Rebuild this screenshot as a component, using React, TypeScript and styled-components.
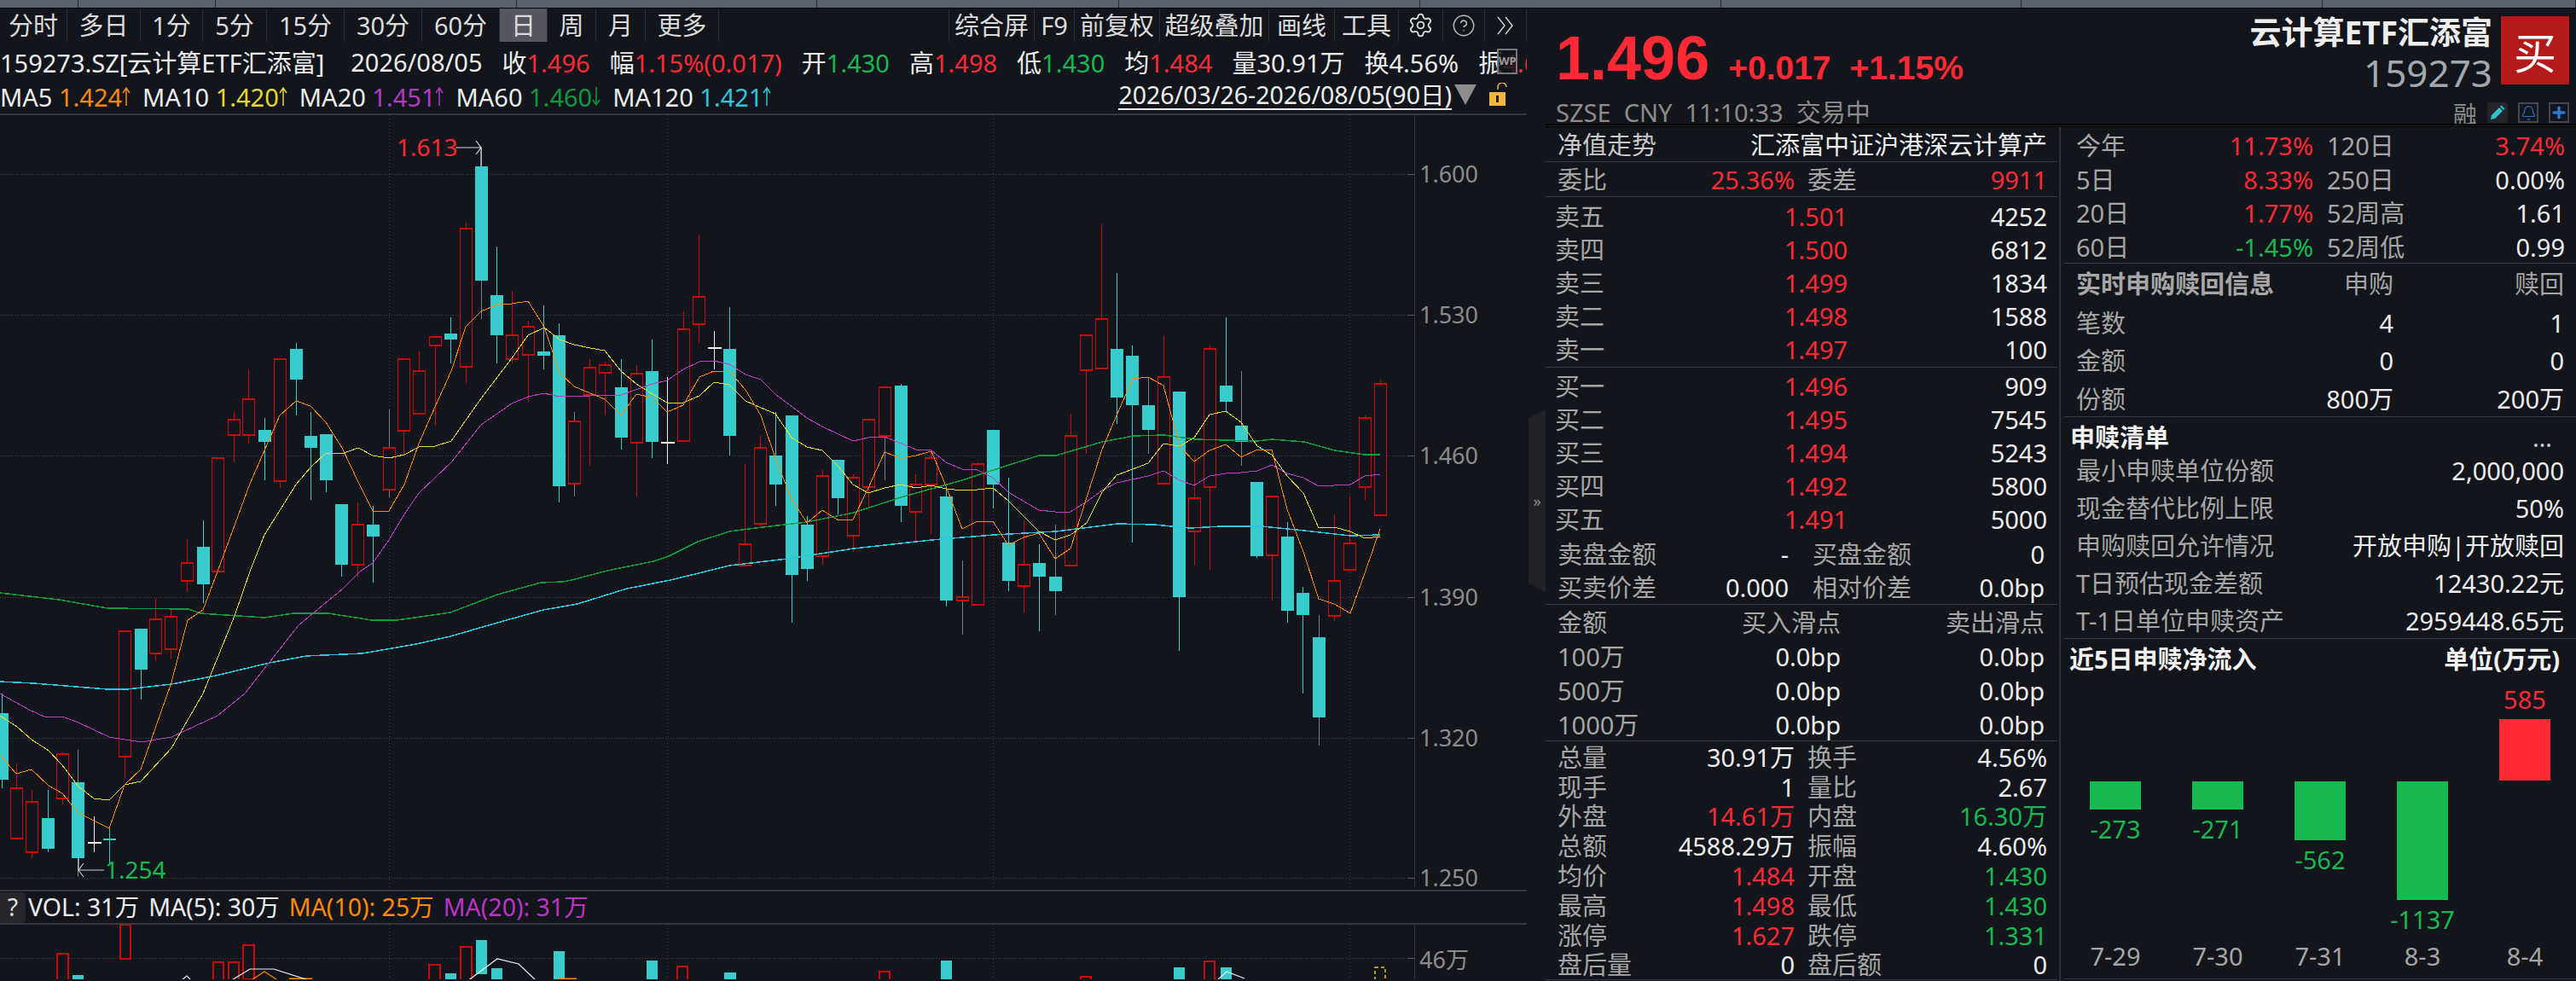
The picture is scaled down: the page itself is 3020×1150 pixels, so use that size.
import React from "react";
import styled, { createGlobalStyle } from "styled-components";
import { Bell, CircleHelp, Plus, Settings } from "lucide-react";

const BG = "#12161c";
const RED = "#ff2a35";
const GREEN = "#16b94f";
const TEAL = "#39cccc";
const CANDLE_RED = "#cc0a0a";
const GRAY = "#a6a6a6";
const WHITE = "#ececec";
const LINE = "#36383d";

const GlobalStyle = createGlobalStyle`
  html, body {
    margin: 0;
    padding: 0;
    background: ${BG};
  }
  * {
    box-sizing: border-box;
  }
  body {
    font-family: "Noto Sans", "Noto Sans CJK SC", sans-serif;
    font-size: 29px;
    color: ${WHITE};
  }
`;

const Root = styled.div`
  width: 3020px;
  height: 1150px;
  overflow: hidden;
  background: ${BG};
`;

const TopStrip = styled.div`
  display: flex;
  height: 10px;
  background: #5a626c;
  border-bottom: 1px solid #000;
`;

const StripPart = styled.div<{ $w: number }>`
  width: ${(p) => p.$w}px;
  border-right: 1px solid #23262b;
`;

const Body = styled.div`
  display: flex;
  height: 1140px;
`;

const ChartPane = styled.div`
  width: 1790px;
  display: flex;
  flex-direction: column;
`;

const Toolbar = styled.div`
  display: flex;
  height: 39px;
`;

const ToolCell = styled.div<{ $w: number; $active?: boolean; $first?: boolean }>`
  width: ${(p) => p.$w}px;
  display: flex;
  align-items: center;
  justify-content: center;
  white-space: nowrap;
  color: #dcdcdc;
  line-height: 1;
  background: ${(p) => (p.$active ? "#55565f" : "transparent")};
  border-right: 1px solid #2b2e33;
  border-left: ${(p) => (p.$first ? "1px solid #2b2e33" : "0")};
`;

const Spacer = styled.div`
  flex: 1;
`;

const InfoLine = styled.div`
  position: relative;
  height: 46px;
  display: flex;
  align-items: center;
  gap: 23px;
  overflow: hidden;
  white-space: nowrap;
`;

const InfoItem = styled.span<{ $gapAfter?: number }>`
  margin-right: ${(p) => p.$gapAfter ?? 0}px;
`;

const Num = styled.span<{ $c: string }>`
  color: ${(p) => p.$c};
`;

const WpIcon = styled.div`
  position: absolute;
  left: 1755px;
  top: 8px;
  width: 24px;
  height: 30px;
  border: 2px solid #77797d;
  background: rgba(18, 22, 28, 0.82);
  color: #9a9a9a;
  font-size: 13px;
  font-weight: 700;
  line-height: 24px;
  text-align: center;
`;

const MaLine = styled.div`
  height: 40px;
  display: flex;
  align-items: center;
  gap: 14px;
  padding: 0 22px 2px 0;
  white-space: nowrap;
  border-bottom: 2px solid ${LINE};
  line-height: 1;
`;

const MaItem = styled.span`
  display: inline-flex;
  align-items: center;
  gap: 0;
`;

const DateRange = styled.div`
  margin-left: auto;
  display: flex;
  align-items: flex-start;
`;

const DateText = styled.span`
  border-bottom: 2px solid #eee;
  padding-bottom: 1px;
  margin-right: 3px;
  font-size: 28.5px;
`;

const Triangle = styled.span`
  width: 0;
  height: 0;
  margin-top: 2px;
  margin-right: 15px;
  border-left: 13px solid transparent;
  border-right: 13px solid transparent;
  border-top: 24px solid #8d8d8d;
`;

const ChartSvg = styled.svg`
  display: block;
  width: 1790px;
  flex: none;
`;

const VolBar = styled.div`
  height: 41px;
  display: flex;
  align-items: center;
  gap: 11px;
  border-top: 2px solid ${LINE};
  border-bottom: 2px solid ${LINE};
  font-size: 28.5px;
  line-height: 1;
  white-space: nowrap;
`;

const HelpChip = styled.div`
  width: 30px;
  height: 36px;
  margin-right: -8px;
  border-radius: 0 5px 5px 0;
  background: #25272d;
  display: flex;
  align-items: center;
  justify-content: center;
  color: #ddd;
`;

const Splitter = styled.div`
  width: 22px;
  display: flex;
  align-items: center;
  justify-content: flex-end;
`;

const Handle = styled.div`
  width: 20px;
  height: 214px;
  margin-top: 14px;
  background: #212227;
  clip-path: polygon(0 10px, 100% 0, 100% 100%, 0 calc(100% - 10px));
  display: flex;
  align-items: center;
  justify-content: center;
  color: #8f8f8f;
  font-size: 18px;
`;

const Panel = styled.div`
  width: 1208px;
  display: flex;
  flex-direction: column;
`;

const Header = styled.div`
  height: 135px;
  flex: none;
  display: flex;
  justify-content: space-between;
  overflow: hidden;
`;

const QuoteBlock = styled.div`
  padding: 22px 0 0 12px;
`;

const PriceRow = styled.div`
  display: flex;
  align-items: baseline;
  gap: 22px;
  height: 72px;
  color: ${RED};
  font-family: "Liberation Sans", sans-serif;
  font-weight: 700;
  font-size: 39px;
  line-height: 72px;
`;

const BigPrice = styled.span`
  font-size: 72px;
`;

const Meta = styled.div`
  margin-top: 13px;
  color: #8c8c8c;
  font-size: 29px;
  line-height: 30px;
  white-space: pre;
`;

const Identity = styled.div`
  display: flex;
  flex-direction: column;
  align-items: flex-end;
  padding: 9px 8px 0 0;
`;

const IdentityTop = styled.div`
  display: flex;
  gap: 10px;
`;

const NameBlock = styled.div`
  display: flex;
  flex-direction: column;
  align-items: flex-end;
`;

const EtfName = styled.div`
  font-size: 37px;
  font-weight: 700;
  line-height: 38px;
  color: #eee;
`;

const EtfCode = styled.div`
  font-size: 44px;
  line-height: 52px;
  margin-top: 2px;
  color: #a3a8ae;
`;

const BuyBox = styled.div`
  width: 80px;
  height: 80px;
  background: #b41a1a;
  color: #fff;
  font-size: 50px;
  display: flex;
  align-items: center;
  justify-content: center;
`;

const IconRow = styled.div`
  margin-top: 9px;
  display: flex;
  align-items: flex-start;
  gap: 12px;
  height: 26px;
`;

const Rong = styled.span`
  color: #8d8d8d;
  font-size: 28px;
  line-height: 28px;
`;

const IconBox = styled.div<{ $fill?: boolean }>`
  width: 24px;
  height: 24px;
  display: flex;
  align-items: center;
  justify-content: center;
  border-radius: ${(p) => (p.$fill ? "3px" : "0")};
  background: ${(p) => (p.$fill ? "#25262b" : "transparent")};
  border: ${(p) => (p.$fill ? "0" : "2px solid #44464b")};
`;

const DoubleRule = styled.div`
  height: 4px;
  flex: none;
  background: #1a1b1f;
  border-top: 2px solid #000;
  border-bottom: 1px solid #000;
`;

const Columns = styled.div`
  display: flex;
  flex: 1;
  min-height: 0;
`;

const Col = styled.div`
  width: 600px;
  display: flex;
  flex-direction: column;
`;

const Gutter = styled.div`
  width: 8px;
  padding: 0 4px 0 2px;
  &::before {
    content: "";
    display: block;
    height: 100%;
    background: #303236;
  }
`;

const Section = styled.div<{ $h: number; $pt?: number; $border?: boolean }>`
  height: ${(p) => p.$h}px;
  flex: none;
  padding-top: ${(p) => p.$pt ?? 0}px;
  border-bottom: ${(p) => (p.$border === false ? "0" : `1px solid ${LINE}`)};
`;

const Row = styled.div<{ $h: number; $cols?: string; $pad?: string; $gap?: number }>`
  height: ${(p) => p.$h}px;
  display: grid;
  grid-template-columns: ${(p) => p.$cols ?? "278px 1fr"};
  column-gap: ${(p) => p.$gap ?? 0}px;
  align-items: center;
  padding: ${(p) => p.$pad ?? "0 12px 0 14px"};
  line-height: 1;
  white-space: nowrap;
`;

const Pair = styled.div`
  display: flex;
  justify-content: space-between;
  align-items: center;
`;

const Label = styled.span<{ $c?: string; $bold?: boolean }>`
  color: ${(p) => p.$c ?? GRAY};
  font-weight: ${(p) => (p.$bold ? 700 : 400)};
`;

const Value = styled.span<{ $c?: string; $left?: boolean }>`
  color: ${(p) => p.$c ?? WHITE};
  text-align: ${(p) => (p.$left ? "left" : "right")};
`;

const InflowGrid = styled.div`
  display: grid;
  grid-template-columns: repeat(5, 120px);
`;

const InflowCol = styled.div`
  display: flex;
  flex-direction: column;
  align-items: center;
`;

const UpZone = styled.div`
  height: 121px;
  display: flex;
  flex-direction: column;
  justify-content: flex-end;
  align-items: center;
  padding-bottom: 1px;
`;

const DownZone = styled.div`
  height: 188px;
  display: flex;
  flex-direction: column;
  align-items: center;
`;

const Bar = styled.div<{ $c: string }>`
  width: 60px;
  background: ${(p) => p.$c};
`;

const BarLabel = styled.div<{ $c: string; $up?: boolean }>`
  color: ${(p) => p.$c};
  line-height: 34px;
  margin: ${(p) => (p.$up ? "0 0 6px" : "6px 0 0")};
`;

const InflowDate = styled.div`
  color: ${GRAY};
  line-height: 34px;
`;

const BottomRule = styled.div`
  height: 1px;
  background: ${LINE};
  margin-top: 9px;
`;

// x, high, low, body top, body bottom, kind. R/T are the ones with a grey wick
type Candle = [number, number, number, number, number, "r" | "t" | "w" | "R" | "T"];

const candles: Candle[] = [
  [2, 813, 924, 836, 914, "t"],
  [19.5, 895, 983, 924, 983, "r"],
  [37, 926, 1006, 940, 999, "r"],
  [56, 926, 999, 959, 995, "t"],
  [73.5, 881, 943, 884, 936, "r"],
  [91.5, 879, 1028, 917, 1006, "T"],
  [110, 957, 999, 987, 987, "w"],
  [128.5, 970, 1013, 983, 985, "t"],
  [146.5, 740, 912, 740, 887, "r"],
  [165, 737, 820, 737, 785, "t"],
  [182.5, 702, 775, 726, 766, "r"],
  [200.5, 715, 773, 723, 761, "r"],
  [219, 632, 694, 660, 681, "r"],
  [238, 610, 707, 641, 685, "t"],
  [255.5, 537, 670, 537, 670, "r"],
  [274, 483, 542, 492, 510, "r"],
  [291.5, 433, 520, 468, 510, "r"],
  [310.5, 490, 563, 504, 518, "t"],
  [328, 421, 572, 421, 564, "r"],
  [347, 402, 487, 409, 445, "t"],
  [364.5, 483, 586, 511, 525, "t"],
  [382.5, 509, 577, 509, 563, "t"],
  [400.5, 591, 676, 591, 662, "t"],
  [419.5, 589, 676, 615, 662, "r"],
  [437.5, 593, 683, 615, 629, "t"],
  [456, 480, 583, 525, 574, "R"],
  [473.5, 421, 533, 421, 505, "r"],
  [491.5, 412, 485, 435, 485, "r"],
  [510, 393, 499, 395, 405, "r"],
  [528.5, 372, 426, 391, 398, "t"],
  [546.5, 261, 449, 268, 430, "r"],
  [564.5, 173, 374, 195, 329, "T"],
  [582.5, 289, 426, 346, 393, "t"],
  [600.5, 341, 426, 393, 421, "r"],
  [619.5, 376, 471, 383, 416, "r"],
  [637.5, 358, 433, 412, 417, "t"],
  [655.5, 379, 589, 393, 570, "t"],
  [673.5, 483, 582, 494, 567, "R"],
  [691.5, 421, 546, 431, 463, "r"],
  [709.5, 424, 487, 428, 437, "r"],
  [728.5, 421, 527, 454, 513, "t"],
  [746, 428, 582, 438, 519, "r"],
  [764.5, 398, 537, 435, 518, "t"],
  [782.5, 442, 544, 518, 518, "w"],
  [801, 365, 517, 386, 517, "r"],
  [819.5, 275, 402, 348, 380, "r"],
  [837.5, 388, 433, 407, 407, "w"],
  [855.5, 360, 534, 409, 511, "t"],
  [873.5, 544, 663, 638, 663, "r"],
  [891.5, 511, 617, 525, 614, "r"],
  [909.5, 483, 593, 534, 568, "t"],
  [928, 487, 730, 487, 674, "t"],
  [946.5, 605, 681, 615, 667, "t"],
  [964.5, 551, 662, 558, 652, "r"],
  [982.5, 539, 603, 539, 584, "t"],
  [1000.5, 556, 647, 560, 628, "r"],
  [1018.5, 490, 595, 492, 571, "r"],
  [1037.5, 454, 563, 454, 511, "R"],
  [1056, 450, 612, 452, 593, "t"],
  [1073.5, 556, 635, 568, 600, "r"],
  [1091.5, 528, 626, 537, 568, "r"],
  [1109.5, 572, 711, 582, 704, "t"],
  [1128, 657, 744, 700, 704, "R"],
  [1146.5, 542, 709, 544, 709, "r"],
  [1164.5, 504, 596, 504, 568, "t"],
  [1182.5, 560, 693, 636, 681, "t"],
  [1200.5, 610, 719, 662, 687, "r"],
  [1218.5, 638, 740, 660, 676, "t"],
  [1237.5, 615, 721, 676, 693, "T"],
  [1255.5, 485, 663, 511, 663, "r"],
  [1273.5, 393, 532, 393, 434, "r"],
  [1291.5, 263, 432, 374, 432, "r"],
  [1309.5, 320, 497, 409, 466, "t"],
  [1327.5, 405, 636, 417, 475, "t"],
  [1346.5, 443, 532, 475, 504, "T"],
  [1364.5, 393, 567, 442, 567, "r"],
  [1382.5, 459, 763, 459, 700, "t"],
  [1400.5, 534, 663, 584, 623, "r"],
  [1418.5, 405, 668, 409, 571, "r"],
  [1437.5, 372, 483, 452, 471, "t"],
  [1455.5, 435, 546, 499, 518, "T"],
  [1473.5, 565, 654, 565, 652, "t"],
  [1491.5, 582, 704, 582, 651, "r"],
  [1509.5, 612, 730, 629, 716, "t"],
  [1527.5, 688, 813, 695, 721, "t"],
  [1546.5, 721, 874, 747, 841, "T"],
  [1564.5, 603, 728, 681, 722, "r"],
  [1582.5, 582, 668, 637, 668, "r"],
  [1600.5, 487, 586, 490, 571, "r"],
  [1618.5, 445, 604, 450, 604, "r"],
];

const ma5 =
  "0,885 19,907 37,902 57,921 73,930 92,953 128,971 146,920 165,902 201,800 220,727 238,715 255,670 293,567 328,487 347,470 364,476 382,495 401,525 420,565 437,599 456,599 474,568 491,520 510,477 529,435 546,383 564,365 583,357 600,356 619,353 638,383 656,437 673,453 692,461 709,468 728,487 746,462 765,466 782,483 801,475 820,442 837,435 855,435 874,457 892,487 909,537 928,585 946,613 964,598 983,610 1000,609 1018,572 1037,530 1056,537 1074,534 1092,529 1109,570 1128,620 1146,611 1164,611 1182,639 1200,630 1218,625 1237,655 1255,643 1274,583 1292,527 1309,487 1328,444 1346,442 1364,452 1383,523 1400,541 1418,528 1437,521 1455,536 1474,527 1491,527 1509,597 1528,647 1546,702 1564,708 1583,719 1600,672 1618,620";
const ma10 =
  "0,839 20,852 37,867 57,880 73,897 92,922 110,936 128,938 146,920 165,916 201,877 238,813 275,722 293,670 310,627 347,568 364,548 382,531 401,532 420,525 437,534 456,537 474,533 491,524 510,523 529,517 564,467 600,420 619,393 638,384 656,398 673,404 692,408 709,411 728,435 746,450 765,462 782,472 801,472 820,464 837,448 855,451 874,470 892,478 909,485 928,513 946,524 964,528 983,547 1000,568 1018,578 1037,572 1056,568 1074,572 1092,569 1109,573 1128,575 1146,574 1164,572 1182,587 1200,605 1218,623 1237,633 1255,627 1274,613 1292,577 1309,557 1328,550 1346,543 1364,520 1383,523 1400,513 1418,486 1437,482 1455,495 1474,523 1491,533 1509,558 1528,578 1546,619 1564,618 1583,623 1600,631 1618,629";
const ma20 =
  "0,813 34,832 54,841 73,840 92,847 128,864 166,870 201,864 255,839 287,813 313,780 350,733 402,690 422,670 437,660 456,633 474,603 491,578 529,542 564,498 600,473 619,465 638,461 656,465 692,464 728,463 765,450 782,446 801,433 820,424 837,423 855,427 874,439 892,445 909,462 946,490 964,500 1000,517 1018,513 1037,512 1074,527 1092,528 1109,542 1128,550 1146,551 1164,560 1182,577 1218,598 1237,600 1255,600 1274,588 1292,575 1309,566 1328,562 1346,558 1364,552 1383,563 1400,569 1418,558 1437,555 1455,554 1474,552 1491,545 1509,555 1528,560 1546,570 1583,568 1600,558 1618,556";
const ma60 =
  "0,695 69,703 126,713 221,714 235,719 310,724 344,719 385,719 436,727 465,727 528,718 583,697 634,683 660,682 670,680 712,669 766,658 784,652 818,635 855,623 886,619 946,612 1001,601 1056,583 1128,563 1183,545 1218,534 1238,534 1292,518 1329,511 1365,510 1401,515 1474,517 1491,515 1529,518 1565,528 1600,533 1618,533";
const ma120 =
  "0,799 40,801 126,808 149,808 201,802 253,792 316,777 359,769 425,766 488,755 528,746 583,730 637,715 677,708 735,690 786,680 827,670 855,663 923,655 1001,643 1092,633 1165,627 1238,623 1310,614 1353,615 1395,619 1432,617 1480,617 1529,622 1583,628 1618,627";

const maLines: [string, string, number][] = [
  [ma120, "#2cc6e0", 1.5],
  [ma60, "#0f9a3e", 1.5],
  [ma20, "#c33ccc", 1],
  [ma10, "#e8dc2c", 1],
  [ma5, "#ff8a00", 1],
];

const priceTicks: [number, string][] = [
  [204, "1.600"],
  [369, "1.530"],
  [534, "1.460"],
  [700, "1.390"],
  [865, "1.320"],
  [1029, "1.250"],
];

const vGrid = [456, 782, 1164.5, 1582];

// left, right, top, kind
const volBars: [number, number, number, "r" | "t"][] = [
  [67, 80, 1120, "r"],
  [85, 98, 1145, "t"],
  [141, 153, 1086, "r"],
  [250, 262, 1130, "r"],
  [268, 280, 1130, "r"],
  [285, 298, 1110, "r"],
  [503, 516, 1133, "r"],
  [522, 535, 1143, "t"],
  [540, 553, 1112, "r"],
  [558, 571, 1104, "t"],
  [576, 589, 1137, "t"],
  [649, 662, 1117, "t"],
  [758, 771, 1128, "t"],
  [794, 806, 1135, "r"],
  [849, 862, 1142, "t"],
  [1031, 1043, 1141, "r"],
  [1103, 1116, 1128, "t"],
  [1267, 1279, 1147, "r"],
  [1376, 1389, 1136, "t"],
  [1412, 1424, 1129, "r"],
  [1431, 1444, 1136, "t"],
];

const CandleShape = ({ c }: { c: Candle }) => {
  const [x, high, low, top, bottom, kind] = c;
  const isRed = kind === "r" || kind === "R";
  const isTeal = kind === "t" || kind === "T";
  const body = isRed ? CANDLE_RED : isTeal ? TEAL : "#f2f2f2";
  const wick = kind === "R" || kind === "T" ? "#77808a" : kind === "w" ? "#f2f2f2" : body;
  const wx = Math.floor(x) + 0.5;
  if (kind === "w") {
    return (
      <g shapeRendering="crispEdges">
        <line x1={wx} x2={wx} y1={high} y2={low} stroke={wick} />
        <line x1={wx - 8} x2={wx + 8} y1={top + 0.5} y2={top + 0.5} stroke={wick} strokeWidth={2} />
      </g>
    );
  }
  return (
    <g shapeRendering="crispEdges">
      <line x1={wx} x2={wx} y1={high} y2={low} stroke={wick} />
      {isRed ? (
        <rect x={wx - 7} y={top} width={14} height={bottom - top} fill={BG} stroke={body} strokeWidth={1.5} />
      ) : (
        <rect x={wx - 7.5} y={top} width={15} height={Math.max(bottom - top, 2)} fill={body} />
      )}
    </g>
  );
};

const GridLines = ({ top, bottom, ys }: { top: number; bottom: number; ys: number[] }) => (
  <g shapeRendering="crispEdges">
    {vGrid.map((x) => (
      <line key={x} x1={x} x2={x} y1={top} y2={bottom} stroke="#3b3e44" strokeDasharray="1 3" />
    ))}
    {ys.map((y) => (
      <g key={y}>
        <line x1={0} x2={1650} y1={y + 0.5} y2={y + 0.5} stroke="#41444a" strokeDasharray="1 2" />
        <line x1={1650} x2={1658} y1={y + 0.5} y2={y + 0.5} stroke="#5a5d62" />
      </g>
    ))}
    <line x1={1658.5} x2={1658.5} y1={top} y2={bottom} stroke="#34363b" />
  </g>
);

const MainChart = () => (
  <ChartSvg viewBox="0 135 1790 908" height={908}>
    <GridLines top={135} bottom={1040} ys={priceTicks.map((t) => t[0])} />
    {candles.map((c) => (
      <CandleShape key={c[0]} c={c} />
    ))}
    {maLines.map(([pts, color, w]) => (
      <polyline key={color} points={pts} fill="none" stroke={color} strokeWidth={w} shapeRendering="crispEdges" />
    ))}
    <path d="M534 173H564M558 165L564 173V195M558 181L564 173" fill="none" stroke="#d8d8d8" strokeWidth={1.2} />
    <text x={465} y={183} fill={RED} fontSize={28}>
      1.613
    </text>
    <path d="M122 1020H92M98 1012L92 1020V1006M98 1028L92 1020" fill="none" stroke="#c8c8c8" strokeWidth={1.2} />
    <text x={123} y={1030} fill={GREEN} fontSize={28}>
      1.254
    </text>
    {priceTicks.map(([y, label]) => (
      <text key={label} x={1664} y={y + 10} fill="#8c8c8c" fontSize={27}>
        {label}
      </text>
    ))}
  </ChartSvg>
);

const VolumeChart = () => (
  <ChartSvg viewBox="0 1086 1790 64" height={64}>
    <GridLines top={1086} bottom={1150} ys={[1125]} />
    {volBars.map(([l, r, top, kind]) =>
      kind === "r" ? (
        <rect key={l} x={l} y={top} width={r - l} height={40} fill={BG} stroke={CANDLE_RED} strokeWidth={1.5} shapeRendering="crispEdges" />
      ) : (
        <rect key={l} x={l} y={top} width={r - l} height={40} fill={TEAL} shapeRendering="crispEdges" />
      )
    )}
    <rect x={850} y={1142} width={13} height={10} fill={TEAL} />
    <rect x={1612} y={1136} width={12} height={20} fill="none" stroke="#e8c52c" strokeWidth={1.5} strokeDasharray="4 3" />
    <path d="M654 1149.5H676M339 1149.5H366" stroke="#ff8a00" strokeWidth={2} />
    <polyline points="293,1152 310,1141 327,1152" fill="none" stroke="#ff8a00" strokeWidth={1.2} />
    <polyline points="270,1152 293,1138 321,1138 365,1152" fill="none" stroke="#f2f2f2" strokeWidth={1.2} />
    <polyline points="212,1152 219,1146 225,1152" fill="none" stroke="#f2f2f2" strokeWidth={1.2} />
    <polyline points="548,1152 583,1126 608,1132 629,1152" fill="none" stroke="#f2f2f2" strokeWidth={1.2} />
    <polyline points="1426,1152 1438,1141 1459,1149" fill="none" stroke="#f2f2f2" strokeWidth={1.2} />
    <text x={1664} y={1137} fill="#8c8c8c" fontSize={27}>
      46万
    </text>
  </ChartSvg>
);

const MaArrow = ({ up, color }: { up: boolean; color: string }) => (
  <svg width="10" height="24" viewBox="0 0 10 24">
    <path
      d={up ? "M5 23V2M1 8L5 2L9 8" : "M5 1V22M1 16L5 22L9 16"}
      fill="none"
      stroke={color}
      strokeWidth={1.5}
    />
  </svg>
);

const LockIcon = () => (
  <svg width="22" height="28" viewBox="0 0 22 28">
    <path d="M11 9V6a5 5 0 0 1 10 0" fill="none" stroke="#f2b63c" strokeWidth={1.5} transform="translate(-1 -1)" />
    <rect x="0" y="11" width="19" height="16" fill="#f2b63c" />
    <rect x="8" y="15" width="3" height="8" fill="#222" />
  </svg>
);

const PencilIcon = () => (
  <svg width="18" height="18" viewBox="0 0 18 18">
    <path d="M1 17l1-5L11 3l4 4-9 9zM12 2l1.5-1.5 4 4L16 6z" fill="#2fc4d4" />
  </svg>
);

const leftTabs: [string, number][] = [
  ["分时", 79],
  ["多日", 86],
  ["1分", 73],
  ["5分", 75],
  ["15分", 91],
  ["30分", 91],
  ["60分", 91],
  ["日", 56],
  ["周", 57],
  ["月", 58],
  ["更多", 86],
];

const rightTabs: [string, number][] = [
  ["综合屏", 101],
  ["F9", 47],
  ["前复权", 100],
  ["超级叠加", 128],
  ["画线", 77],
  ["工具", 75],
];

const maItems: [string, string, string, boolean][] = [
  ["MA5", "1.424", "#ff8a00", true],
  ["MA10", "1.420", "#e5d82a", true],
  ["MA20", "1.451", "#b636c8", true],
  ["MA60", "1.460", "#0b9a3c", false],
  ["MA120", "1.421", "#2cc5dc", true],
];

const sells = [
  ["卖五", "1.501", "4252"],
  ["卖四", "1.500", "6812"],
  ["卖三", "1.499", "1834"],
  ["卖二", "1.498", "1588"],
  ["卖一", "1.497", "100"],
];

const buys = [
  ["买一", "1.496", "909"],
  ["买二", "1.495", "7545"],
  ["买三", "1.494", "5243"],
  ["买四", "1.492", "5800"],
  ["买五", "1.491", "5000"],
];

const slips = [
  ["100万", "0.0bp", "0.0bp"],
  ["500万", "0.0bp", "0.0bp"],
  ["1000万", "0.0bp", "0.0bp"],
];

const stats: [string, string, string | undefined, string, string, string | undefined][] = [
  ["总量", "30.91万", undefined, "换手", "4.56%", undefined],
  ["现手", "1", undefined, "量比", "2.67", undefined],
  ["外盘", "14.61万", RED, "内盘", "16.30万", GREEN],
  ["总额", "4588.29万", undefined, "振幅", "4.60%", undefined],
  ["均价", "1.484", RED, "开盘", "1.430", GREEN],
  ["最高", "1.498", RED, "最低", "1.430", GREEN],
  ["涨停", "1.627", RED, "跌停", "1.331", GREEN],
  ["盘后量", "0", undefined, "盘后额", "0", undefined],
];

const returns: [string, string, string, string, string, string | undefined][] = [
  ["今年", "11.73%", RED, "120日", "3.74%", RED],
  ["5日", "8.33%", RED, "250日", "0.00%", undefined],
  ["20日", "1.77%", RED, "52周高", "1.61", undefined],
  ["60日", "-1.45%", GREEN, "52周低", "0.99", undefined],
];

const creations = [
  ["笔数", "4", "1"],
  ["金额", "0", "0"],
  ["份额", "800万", "200万"],
];

const etfRows = [
  ["最小申赎单位份额", "2,000,000"],
  ["现金替代比例上限", "50%"],
  ["申购赎回允许情况", "开放申购|开放赎回"],
  ["T日预估现金差额", "12430.22元"],
  ["T-1日单位申赎资产", "2959448.65元"],
];

const inflows: [string, number][] = [
  ["7-29", -273],
  ["7-30", -271],
  ["7-31", -562],
  ["8-3", -1137],
  ["8-4", 585],
];

const BAR_SCALE = 0.1225;

const App = () => {
  return (
    <Root>
      <GlobalStyle />
      <TopStrip>
        {[92, 161, 353, 352, 354, 353, 353, 352, 353, 297].map((w, i) => (
          <StripPart key={i} $w={w} />
        ))}
      </TopStrip>
      <Body>
        <ChartPane>
          <Toolbar>
            {leftTabs.map(([t, w]) => (
              <ToolCell key={t} $w={w} $active={t === "日"}>
                {t}
              </ToolCell>
            ))}
            <Spacer />
            {rightTabs.map(([t, w], i) => (
              <ToolCell key={t} $w={w} $first={i === 0}>
                {t}
              </ToolCell>
            ))}
            <ToolCell $w={52}>
              <Settings size={31} strokeWidth={1.4} />
            </ToolCell>
            <ToolCell $w={49}>
              <CircleHelp size={28} strokeWidth={1.3} color="#bbb" />
            </ToolCell>
            <ToolCell $w={49}>
              <svg width="22" height="22" viewBox="0 0 22 22">
                <path d="M2 1l8 10-8 10M11 1l8 10-8 10" fill="none" stroke="#ccc" strokeWidth={1.5} />
              </svg>
            </ToolCell>
          </Toolbar>
          <InfoLine>
            <InfoItem $gapAfter={8}>159273.SZ[云计算ETF汇添富]</InfoItem>
            <InfoItem>2026/08/05</InfoItem>
            <InfoItem>
              收<Num $c={RED}>1.496</Num>
            </InfoItem>
            <InfoItem>
              幅<Num $c={RED}>1.15%(0.017)</Num>
            </InfoItem>
            <InfoItem>
              开<Num $c={GREEN}>1.430</Num>
            </InfoItem>
            <InfoItem>
              高<Num $c={RED}>1.498</Num>
            </InfoItem>
            <InfoItem>
              低<Num $c={GREEN}>1.430</Num>
            </InfoItem>
            <InfoItem>
              均<Num $c={RED}>1.484</Num>
            </InfoItem>
            <InfoItem>量30.91万</InfoItem>
            <InfoItem>换4.56%</InfoItem>
            <InfoItem>
              振<Num $c={RED}>4.60%</Num>
            </InfoItem>
            <WpIcon>WP</WpIcon>
          </InfoLine>
          <MaLine>
            {maItems.map(([name, value, color, up]) => (
              <MaItem key={name}>
                {name}&nbsp;<Num $c={color}>{value}</Num>
                <MaArrow up={up} color={color} />
              </MaItem>
            ))}
            <DateRange>
              <DateText>2026/03/26-2026/08/05(90日)</DateText>
              <Triangle />
              <LockIcon />
            </DateRange>
          </MaLine>
          <MainChart />
          <VolBar>
            <HelpChip>?</HelpChip>
            <span>VOL: 31万</span>
            <span>MA(5): 30万</span>
            <Num $c="#ff8a00">MA(10): 25万</Num>
            <Num $c="#bb35c4">MA(20): 31万</Num>
          </VolBar>
          <VolumeChart />
        </ChartPane>
        <Splitter>
          <Handle>»</Handle>
        </Splitter>
        <Panel>
          <Header>
            <QuoteBlock>
              <PriceRow>
                <BigPrice>1.496</BigPrice>
                <span>+0.017</span>
                <span>+1.15%</span>
              </PriceRow>
              <Meta>{"SZSE  CNY  11:10:33  交易中"}</Meta>
            </QuoteBlock>
            <Identity>
              <IdentityTop>
                <NameBlock>
                  <EtfName>云计算ETF汇添富</EtfName>
                  <EtfCode>159273</EtfCode>
                </NameBlock>
                <BuyBox>买</BuyBox>
              </IdentityTop>
              <IconRow>
                <Rong>融</Rong>
                <IconBox $fill>
                  <PencilIcon />
                </IconBox>
                <IconBox>
                  <Bell size={19} strokeWidth={1.4} color="#2f6fc8" />
                </IconBox>
                <IconBox>
                  <Plus size={20} strokeWidth={4} color="#3a78d0" />
                </IconBox>
              </IconRow>
            </Identity>
          </Header>
          <DoubleRule />
          <Columns>
            <Col>
              <Section $h={41}>
                <Row $h={40} $cols="1fr auto">
                  <Label $c="#c8c8c8">净值走势</Label>
                  <Value>汇添富中证沪港深云计算产</Value>
                </Row>
              </Section>
              <Section $h={41}>
                <Row $h={40} $gap={15}>
                  <Pair>
                    <Label>委比</Label>
                    <Value $c={RED}>25.36%</Value>
                  </Pair>
                  <Pair>
                    <Label>委差</Label>
                    <Value $c={RED}>9911</Value>
                  </Pair>
                </Row>
              </Section>
              <Section $h={200} $pt={3}>
                {sells.map(([l, p, q]) => (
                  <Row key={l} $h={39} $cols="269px 1fr auto" $pad="0 12px 0 11px">
                    <Label>{l}</Label>
                    <Value $c={RED} $left>
                      {p}
                    </Value>
                    <Value>{q}</Value>
                  </Row>
                ))}
              </Section>
              <Section $h={278} $pt={2}>
                {buys.map(([l, p, q]) => (
                  <Row key={l} $h={39} $cols="269px 1fr auto" $pad="0 12px 0 11px">
                    <Label>{l}</Label>
                    <Value $c={RED} $left>
                      {p}
                    </Value>
                    <Value>{q}</Value>
                  </Row>
                ))}
                <Row $h={39} $cols="271px 1fr" $gap={28} $pad="3px 15px 0 14px">
                  <Pair>
                    <Label>卖盘金额</Label>
                    <Value>-</Value>
                  </Pair>
                  <Pair>
                    <Label>买盘金额</Label>
                    <Value>0</Value>
                  </Pair>
                </Row>
                <Row $h={39} $cols="271px 1fr" $gap={28} $pad="3px 15px 0 14px">
                  <Pair>
                    <Label>买卖价差</Label>
                    <Value>0.000</Value>
                  </Pair>
                  <Pair>
                    <Label>相对价差</Label>
                    <Value>0.0bp</Value>
                  </Pair>
                </Row>
              </Section>
              <Section $h={160}>
                <Row $h={40} $cols="minmax(0,1fr) 200px 239px" $pad="0 15px 0 14px">
                  <Label>金额</Label>
                  <Value $c={GRAY}>买入滑点</Value>
                  <Value $c={GRAY}>卖出滑点</Value>
                </Row>
                {slips.map(([l, a, b]) => (
                  <Row key={l} $h={40} $cols="minmax(0,1fr) 200px 239px" $pad="0 15px 0 14px">
                    <Label>{l}</Label>
                    <Value>{a}</Value>
                    <Value>{b}</Value>
                  </Row>
                ))}
              </Section>
              <Section $h={280} $pt={1}>
                {stats.map(([l1, v1, c1, l2, v2, c2]) => (
                  <Row key={l1} $h={34.8} $gap={15}>
                    <Pair>
                      <Label>{l1}</Label>
                      <Value $c={c1}>{v1}</Value>
                    </Pair>
                    <Pair>
                      <Label>{l2}</Label>
                      <Value $c={c2}>{v2}</Value>
                    </Pair>
                  </Row>
                ))}
              </Section>
            </Col>
            <Gutter />
            <Col>
              <Section $h={160} $pt={2}>
                {returns.map(([l1, v1, c1, l2, v2, c2]) => (
                  <Row key={l1} $h={39.5} $gap={16} $pad="0 13px 0 14px">
                    <Pair>
                      <Label>{l1}</Label>
                      <Value $c={c1}>{v1}</Value>
                    </Pair>
                    <Pair>
                      <Label>{l2}</Label>
                      <Value $c={c2}>{v2}</Value>
                    </Pair>
                  </Row>
                ))}
              </Section>
              <Section $h={180}>
                <Row $h={47} $cols="minmax(0,1fr) 200px 200px" $pad="0 14px">
                  <Label $bold>实时申购赎回信息</Label>
                  <Value $c={GRAY}>申购</Value>
                  <Value $c={GRAY}>赎回</Value>
                </Row>
                {creations.map(([l, a, b]) => (
                  <Row key={l} $h={44.5} $cols="minmax(0,1fr) 200px 200px" $pad="0 14px">
                    <Label>{l}</Label>
                    <Value>{a}</Value>
                    <Value>{b}</Value>
                  </Row>
                ))}
              </Section>
              <Section $h={260}>
                <Row $h={41} $cols="1fr auto" $pad="5px 28px 0 7px">
                  <Label $c="#f2f2f2" $bold>
                    申赎清单
                  </Label>
                  <Value $c="#ccc">…</Value>
                </Row>
                {etfRows.map(([l, v]) => (
                  <Row key={l} $h={43.8} $cols="1fr auto" $pad="0 14px">
                    <Label>{l}</Label>
                    <Value>{v}</Value>
                  </Row>
                ))}
              </Section>
              <Section $h={46} $border={false}>
                <Row $h={46} $cols="1fr auto" $pad="0 19px 0 6px">
                  <Label $c="#f2f2f2" $bold>
                    近5日申赎净流入
                  </Label>
                  <Label $c="#f2f2f2" $bold>
                    单位(万元)
                  </Label>
                </Row>
              </Section>
              <InflowGrid>
                {inflows.map(([d, v]) => {
                  const h = Math.abs(v) * BAR_SCALE;
                  return (
                    <InflowCol key={d}>
                      <UpZone>
                        {v > 0 && (
                          <>
                            <BarLabel $c={RED} $up>
                              {v}
                            </BarLabel>
                            <Bar $c={RED} style={{ height: h }} />
                          </>
                        )}
                      </UpZone>
                      <DownZone>
                        {v < 0 && (
                          <>
                            <Bar $c={GREEN} style={{ height: h }} />
                            <BarLabel $c={GREEN}>{v}</BarLabel>
                          </>
                        )}
                      </DownZone>
                      <InflowDate>{d}</InflowDate>
                    </InflowCol>
                  );
                })}
              </InflowGrid>
              <BottomRule />
            </Col>
          </Columns>
        </Panel>
      </Body>
    </Root>
  );
};

export default App;
